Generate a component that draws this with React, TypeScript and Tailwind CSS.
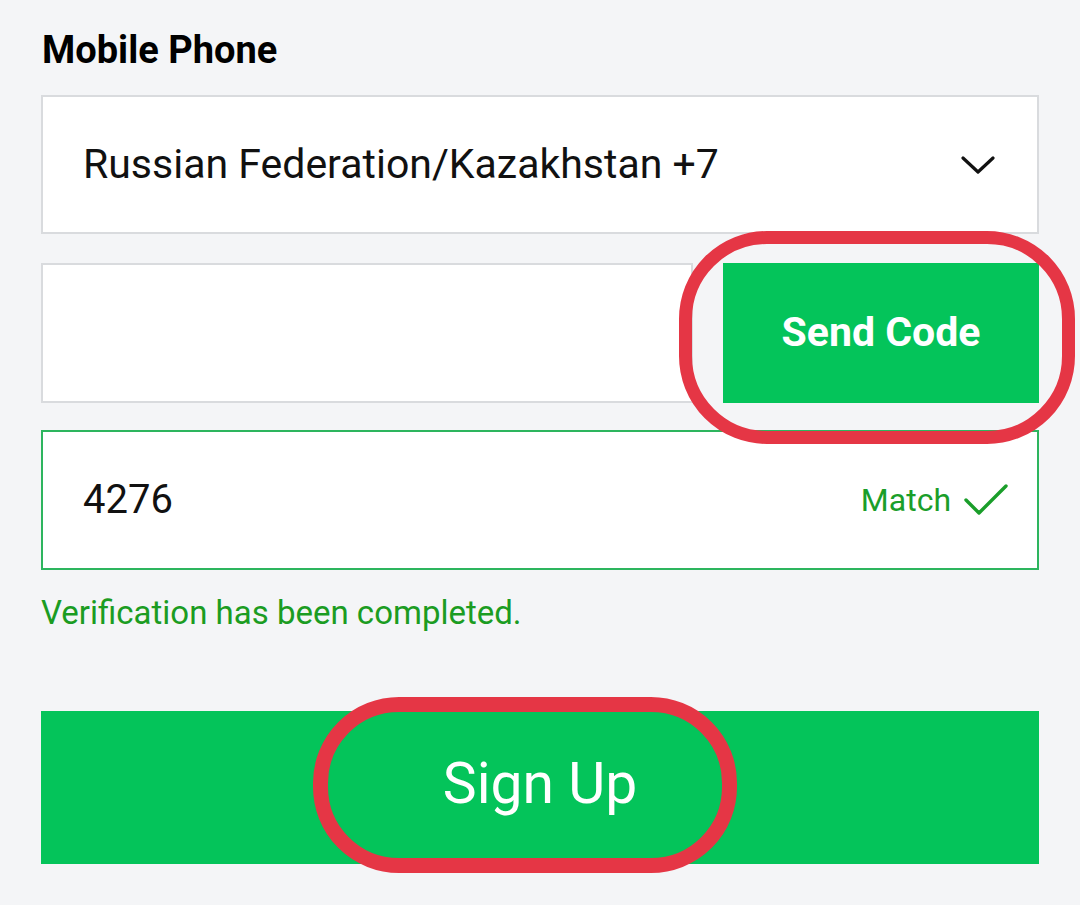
import React from 'react';

const font = { fontFamily: 'Roboto, "Noto Sans", sans-serif' };

const Chevron: React.FC = () => (
    <svg width="34" height="20" viewBox="0 0 34 20" fill="none">
        <path d="M2 3 L17 17 L32 3" stroke="#111" strokeWidth="3.2" strokeLinecap="round" strokeLinejoin="round" />
    </svg>
);

const Check: React.FC = () => (
    <svg width="46" height="34" viewBox="0 0 46 34" fill="none">
        <path d="M3 17 L16 30 L43 3" stroke="#1a9e2a" strokeWidth="3.4" strokeLinecap="round" strokeLinejoin="round" />
    </svg>
);

export default function App() {
    return (
        <div className="relative w-[1080px] h-[905px] overflow-hidden bg-[#f4f5f7]" style={font}>
            <div className="pl-[41px] pr-[41px] pt-[28px]">
                <h1 className="text-[38px] leading-[44px] font-bold text-black ml-[1px]">Mobile Phone</h1>

                {/* Country select */}
                <div className="mt-[23px] h-[139px] bg-white border-2 border-[#d9dbde] flex items-center justify-between pl-[40px] pr-[42px]">
                    <span className="text-[41px] text-[#111]">Russian Federation/Kazakhstan +7</span>
                    <Chevron />
                </div>

                {/* Phone + send code */}
                <div className="mt-[29px] flex gap-[30px] h-[140px]">
                    <div className="flex-1 bg-white border-2 border-[#d9dbde]" />
                    <button className="w-[316px] bg-[#04c45a] text-white text-[41px] font-bold">Send Code</button>
                </div>

                {/* Verification code */}
                <div className="mt-[27px] h-[140px] bg-white border-2 border-[#2db55e] flex items-center justify-between pl-[40px] pr-[28px]">
                    <span className="text-[40px] text-[#111]">4276</span>
                    <span className="flex items-center gap-[12px] text-[32px] text-[#1a9e2a]">
                        Match
                        <Check />
                    </span>
                </div>

                <p className="mt-[23px] text-[33px] leading-[40px] text-[#1b9c22]">Verification has been completed.</p>

                <button className="mt-[78px] w-full h-[153px] bg-[#04c45a] text-white text-[57px] pb-[8px]">Sign Up</button>
            </div>

            {/* annotation rings */}
            <div className="absolute left-[679px] top-[231px] w-[396px] h-[213px] rounded-[88px] border-[13px] border-[#e53645]" />
            <div className="absolute left-[313px] top-[697px] w-[424px] h-[176px] rounded-[86px] border-[15px] border-[#e53645]" />
        </div>
    );
}
